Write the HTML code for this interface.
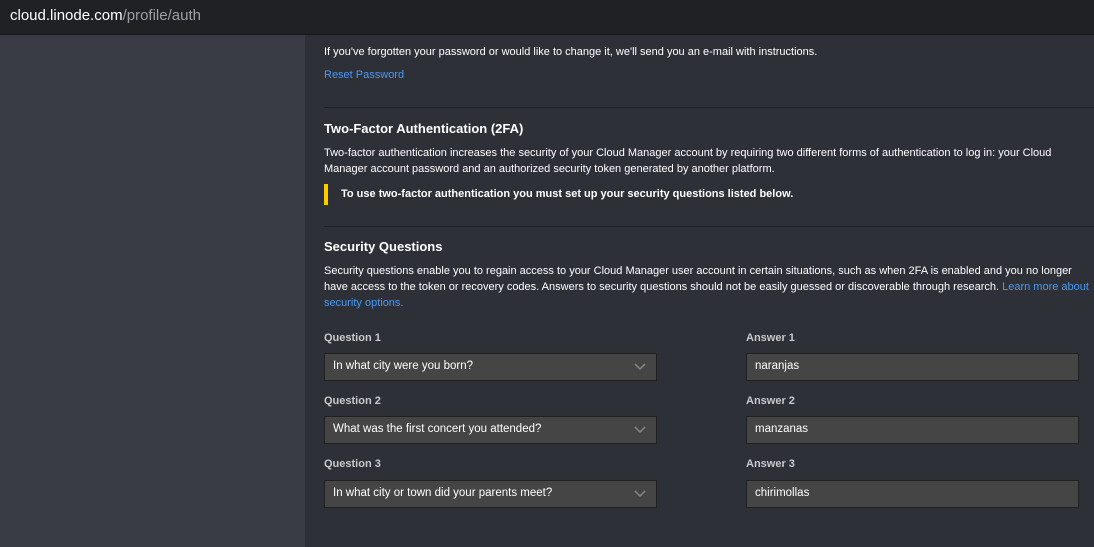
<!DOCTYPE html>
<html><head><style>
*{margin:0;padding:0;box-sizing:border-box}
body{width:1094px;height:547px;overflow:hidden;background:#2e3038;font-family:"Liberation Sans",sans-serif;position:relative;color:#fff}
.top{position:absolute;left:0;top:0;width:1094px;height:35px;background:#202125;border-bottom:1px solid #16171a}
.url{position:absolute;left:10px;top:7px;font-size:15px;color:#fff}
.url span{color:#9aa0a6}
.side{position:absolute;left:0;top:35px;width:305px;height:512px;background:#393c44}
.t{position:absolute;left:324px;font-size:11px;color:#fff;line-height:16px;white-space:nowrap}
.h{position:absolute;left:324px;font-size:13px;font-weight:bold;color:#fff}
.link{color:#4d99f0}
.hr{position:absolute;left:324px;width:770px;height:1px;background:#1f2025}
.lab{position:absolute;font-size:11px;font-weight:bold;color:#c9c9c9}
.f{position:absolute;height:28px;background:#454545;border:1px solid #202020;font-size:11.5px;color:#fff;padding:6px 8px}
.sel{left:324px;width:333px}
.ans{left:746px;width:333px}
.chev{position:absolute;right:10px;top:9px}
</style></head><body>
<div class="top"><div class="url">cloud.linode.com<span>/profile/auth</span></div></div>
<div class="side"></div>
<div class="t" style="top:44px">If you've forgotten your password or would like to change it, we'll send you an e-mail with instructions.</div>
<div class="t link" style="top:67px">Reset Password</div>
<div class="hr" style="top:107px"></div>
<div class="h" style="top:121px">Two-Factor Authentication (2FA)</div>
<div class="t" style="top:145px">Two-factor authentication increases the security of your Cloud Manager account by requiring two different forms of authentication to log in: your Cloud<br>Manager account password and an authorized security token generated by another platform.</div>
<div style="position:absolute;left:324px;top:184px;width:4px;height:21px;background:#ffcc00"></div>
<div class="t" style="top:186px;left:341px;font-weight:bold">To use two-factor authentication you must set up your security questions listed below.</div>
<div class="hr" style="top:226px"></div>
<div class="h" style="top:239px">Security Questions</div>
<div class="t" style="top:263px">Security questions enable you to regain access to your Cloud Manager user account in certain situations, such as when 2FA is enabled and you no longer<br>have access to the token or recovery codes. Answers to security questions should not be easily guessed or discoverable through research. <span class="link">Learn more about</span><br><span class="link">security options.</span></div>

<div class="lab" style="left:324px;top:332px">Question 1</div>
<div class="lab" style="left:746px;top:332px">Answer 1</div>
<div class="f sel" style="top:353px">In what city were you born?<svg class="chev" width="12" height="8"><path d="M1 1l5 5 5-5" stroke="#888" fill="none" stroke-width="1.5"/></svg></div>
<div class="f ans" style="top:353px">naranjas</div>

<div class="lab" style="left:324px;top:395px">Question 2</div>
<div class="lab" style="left:746px;top:395px">Answer 2</div>
<div class="f sel" style="top:416px">What was the first concert you attended?<svg class="chev" width="12" height="8"><path d="M1 1l5 5 5-5" stroke="#888" fill="none" stroke-width="1.5"/></svg></div>
<div class="f ans" style="top:416px">manzanas</div>

<div class="lab" style="left:324px;top:458px">Question 3</div>
<div class="lab" style="left:746px;top:458px">Answer 3</div>
<div class="f sel" style="top:480px">In what city or town did your parents meet?<svg class="chev" width="12" height="8"><path d="M1 1l5 5 5-5" stroke="#888" fill="none" stroke-width="1.5"/></svg></div>
<div class="f ans" style="top:480px">chirimollas</div>
</body></html>
